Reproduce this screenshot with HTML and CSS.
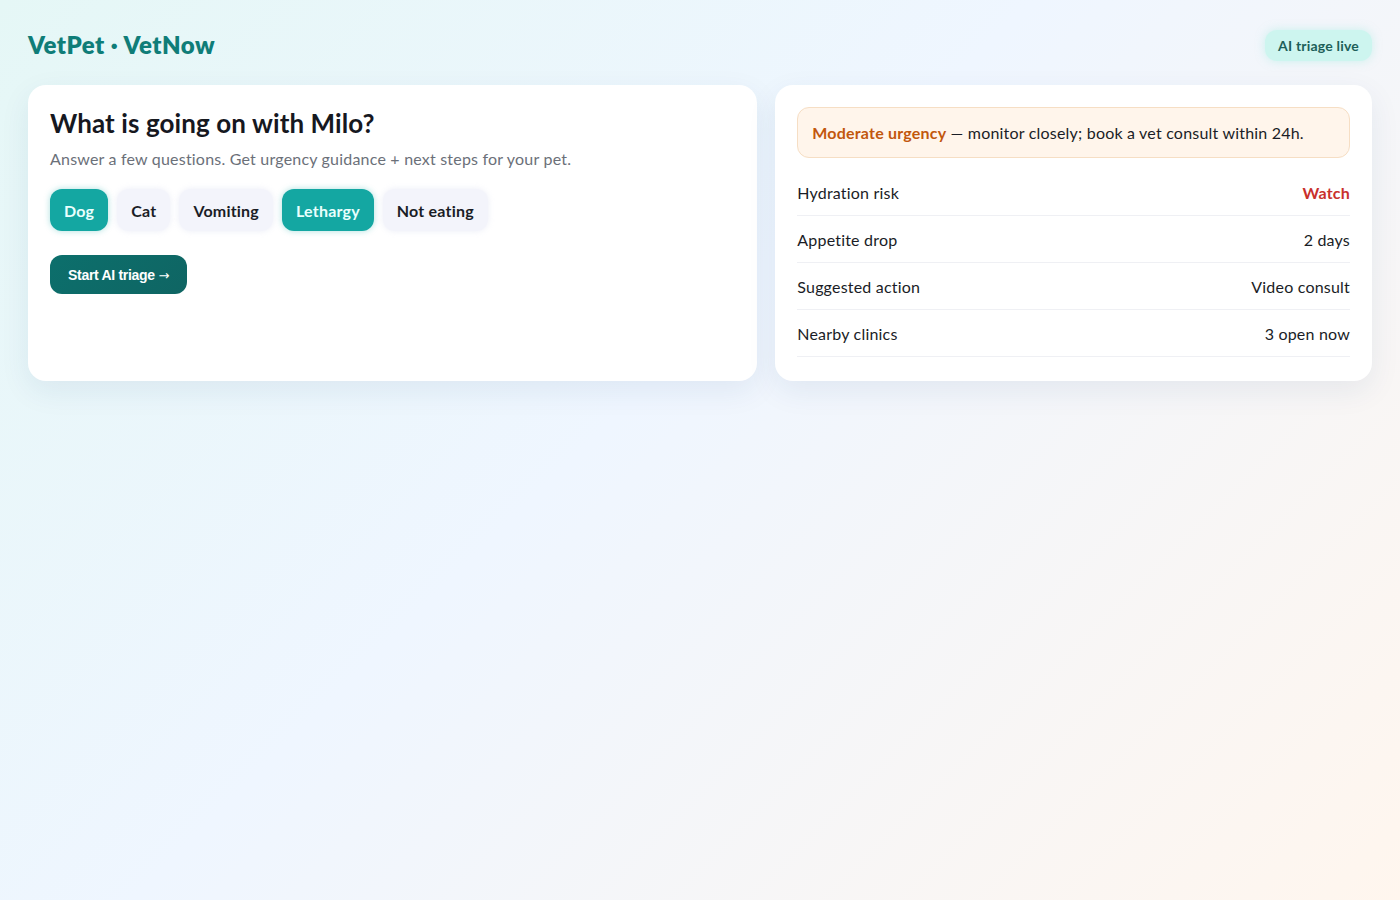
FILE: index.html
```html
<!DOCTYPE html>
<html lang="en">
<head>
    <meta charset="UTF-8">
    <meta name="viewport" content="width=device-width, initial-scale=1.0">
    <title>VetPet · VetNow</title>
    <link rel="stylesheet" href="styles.css">
</head>
<body>
    <header class="topbar">
        <div class="logo">VetPet · VetNow</div>
        <span class="live-pill">AI triage live</span>
    </header>

    <main class="layout">
        <section class="card intake">
            <h1>What is going on with Milo?</h1>
            <p class="lead">Answer a few questions. Get urgency guidance + next steps for your pet.</p>
            <div class="chips">
                <span class="chip active">Dog</span>
                <span class="chip">Cat</span>
                <span class="chip">Vomiting</span>
                <span class="chip active">Lethargy</span>
                <span class="chip">Not eating</span>
            </div>
            <button class="start-btn">Start AI triage <span class="arrow">→</span></button>
        </section>

        <section class="card result">
            <div class="urgency">
                <strong>Moderate urgency</strong> — monitor closely; book a vet consult within 24h.
            </div>
            <div class="row">
                <span>Hydration risk</span>
                <span class="warn">Watch</span>
            </div>
            <div class="row">
                <span>Appetite drop</span>
                <span>2 days</span>
            </div>
            <div class="row">
                <span>Suggested action</span>
                <span>Video consult</span>
            </div>
            <div class="row">
                <span>Nearby clinics</span>
                <span>3 open now</span>
            </div>
        </section>
    </main>
</body>
</html>
```

FILE: styles.css
```css
body {
    font-family: Lato, "Noto Sans", sans-serif;
    letter-spacing: 0.2px;
    margin: 0;
    padding: 28px;
    min-height: 100vh;
    box-sizing: border-box;
    color: #1f2430;
    background: linear-gradient(135deg, #e5f7f6 0%, #eff6ff 45%, #fff6ee 100%);
}

.topbar {
    display: flex;
    justify-content: space-between;
    align-items: center;
    height: 34px;
    margin-bottom: 23px;
}

.logo {
    font-size: 24px;
    font-weight: 800;
    letter-spacing: 0.5px;
    color: #0f7d78;
    margin-top: -2px;
}

.live-pill {
    background-color: #cdf5ef;
    color: #1d5f59;
    font-size: 14px;
    font-weight: 700;
    padding: 7px 13px;
    border-radius: 12px;
    box-shadow: 0 0 10px rgba(160, 236, 226, 0.5);
}

.layout {
    display: grid;
    grid-template-columns: 1.1fr 0.9fr;
    gap: 18px;
    align-items: start;
}

.card {
    background-color: #fff;
    border-radius: 18px;
    box-shadow: 0 10px 30px rgba(30, 60, 110, 0.08);
    padding: 22px;
    box-sizing: border-box;
    min-height: 296px;
}

.intake h1 {
    margin: 0;
    font-size: 26px;
    font-weight: 700;
    letter-spacing: 0.1px;
    color: #16181f;
}

.lead {
    margin: 10px 0 0;
    font-size: 16px;
    color: #6b7079;
}

.chips {
    display: flex;
    gap: 9px;
    margin-top: 21px;
}

.chip {
    background-color: #f3f4fb;
    color: #1a1d26;
    font-size: 16px;
    font-weight: 700;
    height: 42px;
    padding: 0 14px;
    border-radius: 12px;
    display: flex;
    align-items: center;
    box-shadow: 0 0 6px rgba(230, 232, 245, 0.8);
}

.chip.active {
    background-color: #14a7a2;
    color: #e9fffd;
    box-shadow: 0 0 6px rgba(20, 167, 162, 0.35);
}

.start-btn {
    margin-top: 24px;
    background: linear-gradient(135deg, #0c6f6c, #0f6563);
    color: #fff;
    font-family: "Liberation Sans", Arial, sans-serif;
    font-size: 14px;
    font-weight: 700;
    letter-spacing: -0.3px;
    height: 39px;
    padding: 0 18px;
    border: none;
    border-radius: 12px;
    cursor: pointer;
}

.start-btn .arrow {
    font-family: "DejaVu Sans", sans-serif;
    font-weight: 400;
    font-size: 13px;
}

.urgency {
    background-color: #fff5eb;
    border: 1px solid #f6dec4;
    border-radius: 12px;
    padding: 15px 14px;
    font-size: 16px;
    color: #1a1d26;
    margin-bottom: 11px;
}

.urgency strong {
    color: #c2570d;
}

.row {
    display: flex;
    justify-content: space-between;
    align-items: center;
    height: 46px;
    border-bottom: 1px solid #eff0f4;
    font-size: 16px;
    color: #1a1d26;
}

.warn {
    color: #c9302c;
    font-weight: 700;
}
```
